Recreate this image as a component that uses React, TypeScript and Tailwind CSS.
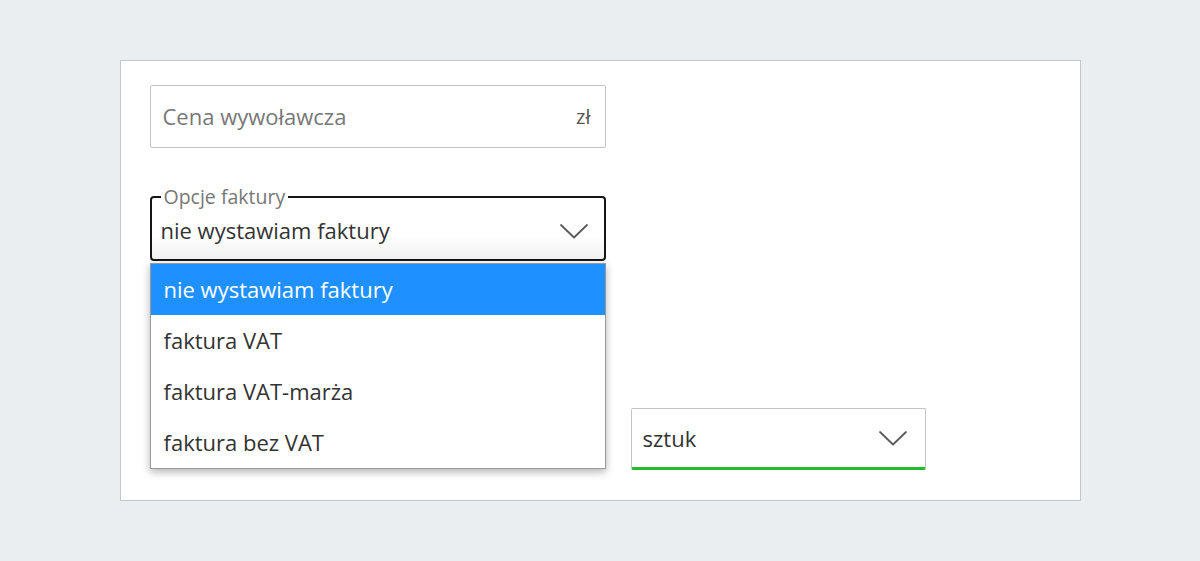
import { useState } from 'react'

const options = ['nie wystawiam faktury', 'faktura VAT', 'faktura VAT-marża', 'faktura bez VAT']

function Chevron() {
  return (
    <svg width="30" height="16" viewBox="0 0 30 16" fill="none" className="shrink-0">
      <polyline points="2,2 15,14.5 28,2" stroke="#5a5a5a" strokeWidth="1.8" strokeLinecap="round" strokeLinejoin="round" />
    </svg>
  )
}

export default function App() {
  const [selected, setSelected] = useState(0)

  return (
    <div className="h-[561px] bg-[#ebeef1] pt-[60px] font-['Open_Sans',sans-serif]">
      <div className="mx-auto flex h-[441px] w-[961px] flex-col border border-[#c6c6c6] bg-white pl-[29px] pt-[24px]">
        {/* Cena */}
        <div className="flex h-[63px] w-[456px] items-center justify-between rounded-[2px] border border-[#c4c4c4] pl-[12px] pr-[14px]">
          <span className="text-[22px] text-[#777]">Cena wywoławcza</span>
          <span className="text-[20px] text-[#555]">zł</span>
        </div>

        {/* Opcje faktury */}
        <div className="relative mt-[39px] w-[456px]">
          <fieldset className="h-[74px] rounded-[4px] border-2 border-[#151515] bg-gradient-to-b from-white from-60% to-[#f1f1f1] pl-[9px] pr-[15px]">
            <legend className="px-[3px] text-[19.5px] leading-[20px] text-[#777]">Opcje faktury</legend>
            <div className="flex h-[47px] items-center justify-between">
              <span className="text-[22px] text-[#333]">{options[selected]}</span>
              <Chevron />
            </div>
          </fieldset>

          {/* dropdown */}
          <ul className="absolute left-0 top-[76px] z-10 w-[456px] border border-[#9a9a9a] bg-white shadow-[0_3px_8px_rgba(0,0,0,0.3)]">
            {options.map((o, i) => (
              <li
                key={o}
                onClick={() => setSelected(i)}
                className={`flex h-[51px] items-center px-[13px] text-[22px] ${
                  i === selected ? 'bg-[#1e90ff] text-white' : 'text-[#333]'
                }`}
              >
                {o}
              </li>
            ))}
          </ul>
        </div>

        {/* row */}
        <div className="mt-[147px] flex gap-[25px]">
          <div className="h-[62px] w-[456px]" />
          <div className="flex h-[62px] w-[295px] items-center justify-between rounded-[2px] border border-b-[3px] border-[#c4c4c4] border-b-[#24bb2c] pl-[11px] pr-[17px]">
            <span className="text-[22px] text-[#333]">sztuk</span>
            <Chevron />
          </div>
        </div>
      </div>
    </div>
  )
}
